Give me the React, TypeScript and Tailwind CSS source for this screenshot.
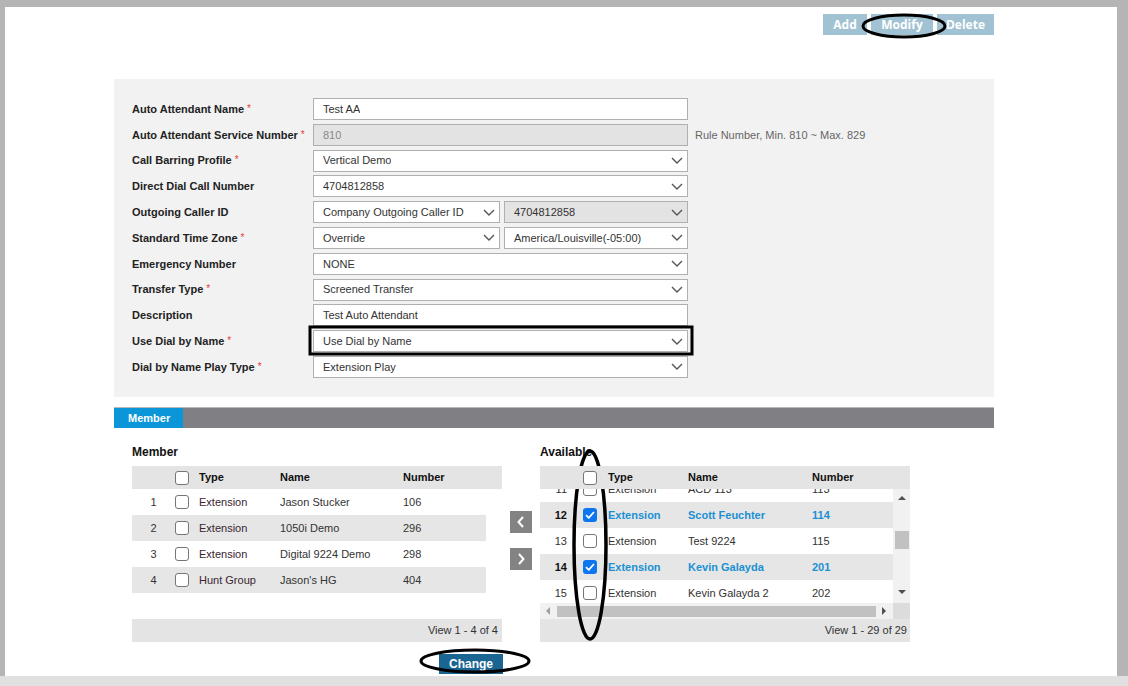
import React from 'react'

type Field = {
  label: string
  req?: boolean
  kind: 'input' | 'select' | 'split'
  value: string
  value2?: string
  disabled?: boolean
  disabled2?: boolean
  hint?: string
}

const fields: Field[] = [
  { label: 'Auto Attendant Name', req: true, kind: 'input', value: 'Test AA' },
  { label: 'Auto Attendant Service Number', req: true, kind: 'input', value: '810', disabled: true, hint: 'Rule Number, Min. 810 ~ Max. 829' },
  { label: 'Call Barring Profile', req: true, kind: 'select', value: 'Vertical Demo' },
  { label: 'Direct Dial Call Number', kind: 'select', value: '4704812858' },
  { label: 'Outgoing Caller ID', kind: 'split', value: 'Company Outgoing Caller ID', value2: '4704812858', disabled2: true },
  { label: 'Standard Time Zone', req: true, kind: 'split', value: 'Override', value2: 'America/Louisville(-05:00)' },
  { label: 'Emergency Number', kind: 'select', value: 'NONE' },
  { label: 'Transfer Type', req: true, kind: 'select', value: 'Screened Transfer' },
  { label: 'Description', kind: 'input', value: 'Test Auto Attendant' },
  { label: 'Use Dial by Name', req: true, kind: 'select', value: 'Use Dial by Name' },
  { label: 'Dial by Name Play Type', req: true, kind: 'select', value: 'Extension Play' },
]

const members = [
  { n: 1, type: 'Extension', name: 'Jason Stucker', num: '106' },
  { n: 2, type: 'Extension', name: '1050i Demo', num: '296' },
  { n: 3, type: 'Extension', name: 'Digital 9224 Demo', num: '298' },
  { n: 4, type: 'Hunt Group', name: "Jason's HG", num: '404' },
]

const available = [
  { n: 11, type: 'Extension', name: 'ACD 113', num: '113', sel: false },
  { n: 12, type: 'Extension', name: 'Scott Feuchter', num: '114', sel: true },
  { n: 13, type: 'Extension', name: 'Test 9224', num: '115', sel: false },
  { n: 14, type: 'Extension', name: 'Kevin Galayda', num: '201', sel: true },
  { n: 15, type: 'Extension', name: 'Kevin Galayda 2', num: '202', sel: false },
]

function Chevron() {
  return (
    <svg width="12" height="7" viewBox="0 0 12 7" className="shrink-0">
      <path d="M1 1l5 5 5-5" fill="none" stroke="#555" strokeWidth="1.4" />
    </svg>
  )
}

function Check({ on }: { on?: boolean }) {
  if (on)
    return (
      <span className="w-[14px] h-[14px] rounded-[3px] bg-[#0b76ee] flex items-center justify-center shrink-0">
        <svg width="10" height="8" viewBox="0 0 10 8">
          <path d="M1 4.2l2.8 2.6L9 1" fill="none" stroke="white" strokeWidth="1.8" />
        </svg>
      </span>
    )
  return <span className="block w-[14px] h-[14px] rounded-[3px] border border-[#767676] bg-white shrink-0" />
}

function Box({ value, select, disabled, width }: { value: string; select?: boolean; disabled?: boolean; width: string }) {
  return (
    <div
      className={`${width} h-[22px] border border-[#b0b0b0] ${disabled ? 'bg-[#e3e3e3]' : 'bg-white'} pl-[9px] pr-[4px] flex items-center justify-between text-[11px] ${disabled && !select ? 'text-[#888]' : 'text-[#333]'}`}
    >
      <span className="truncate">{value}</span>
      {select && <Chevron />}
    </div>
  )
}

function FormRow({ f }: { f: Field }) {
  return (
    <div className="flex items-center h-[22px]">
      <div className="w-[181px] text-[11px] font-bold text-[#222] whitespace-nowrap">
        {f.label}
        {f.req && <span className="text-[#e23b3b] text-[10px] font-normal ml-[3px] align-top">*</span>}
      </div>
      {f.kind === 'split' ? (
        <div className="flex gap-[4px]">
          <Box value={f.value} select width="w-[187px]" />
          <Box value={f.value2 || ''} select disabled={f.disabled2} width="w-[184px]" />
        </div>
      ) : (
        <Box value={f.value} select={f.kind === 'select'} disabled={f.disabled} width="w-[375px]" />
      )}
      {f.hint && <span className="ml-[7px] text-[11px] text-[#666]">{f.hint}</span>}
    </div>
  )
}

function ArrowBtn({ dir }: { dir: 'l' | 'r' }) {
  return (
    <div className="w-[22px] h-[22px] bg-[#838383] flex items-center justify-center">
      <svg width="8" height="12" viewBox="0 0 8 12">
        <path d={dir === 'l' ? 'M6 1L1.5 6 6 11' : 'M2 1l4.5 5L2 11'} fill="none" stroke="white" strokeWidth="2" />
      </svg>
    </div>
  )
}

function Tri({ dir }: { dir: 'u' | 'd' | 'l' | 'r' }) {
  const d = { u: 'M0 5h8L4 1z', d: 'M0 1h8L4 5z', l: 'M5 0v8L1 4z', r: 'M1 0v8l4-4z' }[dir]
  const vert = dir === 'u' || dir === 'd'
  return (
    <svg width={vert ? 8 : 6} height={vert ? 6 : 8} viewBox={vert ? '0 0 8 6' : '0 0 6 8'}>
      <path d={d} fill={dir === 'l' ? '#a0a0a0' : '#505050'} />
    </svg>
  )
}

export default function App() {
  return (
    <div className="relative w-[1128px] h-[686px] bg-[#b4b5b4] overflow-hidden font-['Liberation_Sans',Arial,sans-serif]">
      <div className="pt-[7px] pl-[5px] pr-[11px]">
        <div className="h-[669px] bg-white pl-[109px] pt-[7px]">
          <div className="w-[880px]">
            {/* toolbar */}
            <div className="flex justify-end gap-[4px] h-[21px] font-['Open_Sans',sans-serif] text-[12px] font-bold text-white">
              <div className="w-[44px] bg-[#a1c2d3] flex items-center justify-center">Add</div>
              <div className="w-[62px] bg-[#a1c2d3] flex items-center justify-center">Modify</div>
              <div className="w-[57px] bg-[#a1c2d3] flex items-center justify-center">Delete</div>
            </div>

            {/* form */}
            <div className="mt-[44px] h-[318px] bg-[#f2f2f2] pt-[19px] pl-[18px] flex flex-col gap-[3.8px]">
              {fields.map((f) => (
                <FormRow key={f.label} f={f} />
              ))}
            </div>

            {/* tab bar */}
            <div className="mt-[10px] h-[21px] bg-[#808084] border-t border-[#b8b8bb] flex">
              <div className="w-[69px] bg-[#0a96d8] text-white text-[11px] font-bold pl-[14px] flex items-center">Member</div>
            </div>

            {/* member section */}
            <div className="pl-[18px] flex text-[11px] text-[#333]">
              {/* member table */}
              <div className="w-[370px]">
                <div className="mt-[17px] h-[15px] leading-[15px] text-[12px] font-bold text-[#111]">Member</div>
                <div className="mt-[6px] h-[23px] bg-[#e4e4e4] flex items-center font-bold text-[#111]">
                  <div className="w-[43px]" />
                  <div className="w-[24px]"><Check /></div>
                  <div className="w-[81px]">Type</div>
                  <div className="w-[123px]">Name</div>
                  <div>Number</div>
                </div>
                <div className="h-[130px]">
                  {members.map((m, i) => (
                    <div key={m.n} className={`w-[354px] h-[26px] flex items-center ${i % 2 ? 'bg-[#e6e6e6]' : ''}`}>
                      <div className="w-[43px] text-center">{m.n}</div>
                      <div className="w-[24px]"><Check /></div>
                      <div className="w-[81px] text-[#3a2530]">{m.type}</div>
                      <div className="w-[123px]">{m.name}</div>
                      <div>{m.num}</div>
                    </div>
                  ))}
                </div>
                <div className="h-[23px] bg-[#e4e4e4] flex items-center justify-end pr-[4px]">View 1 - 4 of 4</div>
              </div>

              {/* move buttons */}
              <div className="ml-[8px] w-[22px] pt-[83px] flex flex-col gap-[15px]">
                <ArrowBtn dir="l" />
                <ArrowBtn dir="r" />
              </div>

              {/* available table */}
              <div className="ml-[8px] w-[370px]">
                <div className="mt-[17px] h-[15px] leading-[15px] text-[12px] font-bold text-[#111]">Available</div>
                <div className="mt-[6px] h-[23px] bg-[#e4e4e4] flex items-center font-bold text-[#111] relative z-10">
                  <div className="w-[31px]" />
                  <div className="w-[37px] pl-[12px]"><Check /></div>
                  <div className="w-[80px]">Type</div>
                  <div className="w-[124px]">Name</div>
                  <div>Number</div>
                </div>
                <div className="flex h-[114px]">
                  <div className="w-[353px] overflow-hidden">
                    <div className="-mt-[13px]">
                      {available.map((r, i) => (
                        <div key={r.n} className={`h-[26px] flex items-center ${i % 2 ? 'bg-[#e6e6e6]' : 'bg-white'}`}>
                          <div className={`w-[31px] text-right pr-[4px] ${r.sel ? 'font-bold text-[#111]' : ''}`}>{r.n}</div>
                          <div className="w-[37px] pl-[12px]"><Check on={r.sel} /></div>
                          <div className={`w-[80px] ${r.sel ? 'font-bold text-[#1b90d4]' : ''}`}>{r.type}</div>
                          <div className={`w-[124px] ${r.sel ? 'font-bold text-[#1b90d4]' : ''}`}>{r.name}</div>
                          <div className={r.sel ? 'font-bold text-[#1b90d4]' : ''}>{r.num}</div>
                        </div>
                      ))}
                    </div>
                  </div>
                  <div className="w-[17px] bg-[#f1f1f1] flex flex-col items-center pt-[6px] pb-[8px]">
                    <Tri dir="u" />
                    <div className="mt-[30px] w-[14px] h-[18px] bg-[#c1c1c1]" />
                    <div className="flex-1" />
                    <Tri dir="d" />
                  </div>
                </div>
                <div className="flex h-[16px]">
                  <div className="w-[353px] bg-[#f1f1f1] flex items-center pl-[5px] pr-[6px]">
                    <Tri dir="l" />
                    <div className="ml-[6px] flex-1 h-[11px] bg-[#c1c1c1]" />
                    <div className="ml-[5px]"><Tri dir="r" /></div>
                  </div>
                  <div className="w-[17px] bg-[#dcdcdc]" />
                </div>
                <div className="h-[23px] bg-[#e4e4e4] flex items-center justify-end pr-[3px]">View 1 - 29 of 29</div>
              </div>
            </div>

            {/* change */}
            <div className="mt-[12px] ml-[325px] w-[64px] h-[20px] bg-[#1a6592] text-white text-[12px] font-bold flex items-center justify-center">
              Change
            </div>
          </div>
        </div>
      </div>
      <div className="h-[10px] bg-[#e0e0e0]" />

      {/* hand-drawn annotations */}
      <svg className="absolute inset-0 pointer-events-none" width="1128" height="686">
        <ellipse cx="904" cy="26" rx="41" ry="11" fill="none" stroke="#000" strokeWidth="3" />
        <rect x="310" y="327" width="382" height="27" fill="none" stroke="#000" strokeWidth="3" />
        <ellipse cx="590" cy="545" rx="16" ry="94" fill="none" stroke="#000" strokeWidth="3.5" />
        <ellipse cx="475" cy="661" rx="54" ry="11" fill="none" stroke="#000" strokeWidth="3" />
      </svg>
    </div>
  )
}
